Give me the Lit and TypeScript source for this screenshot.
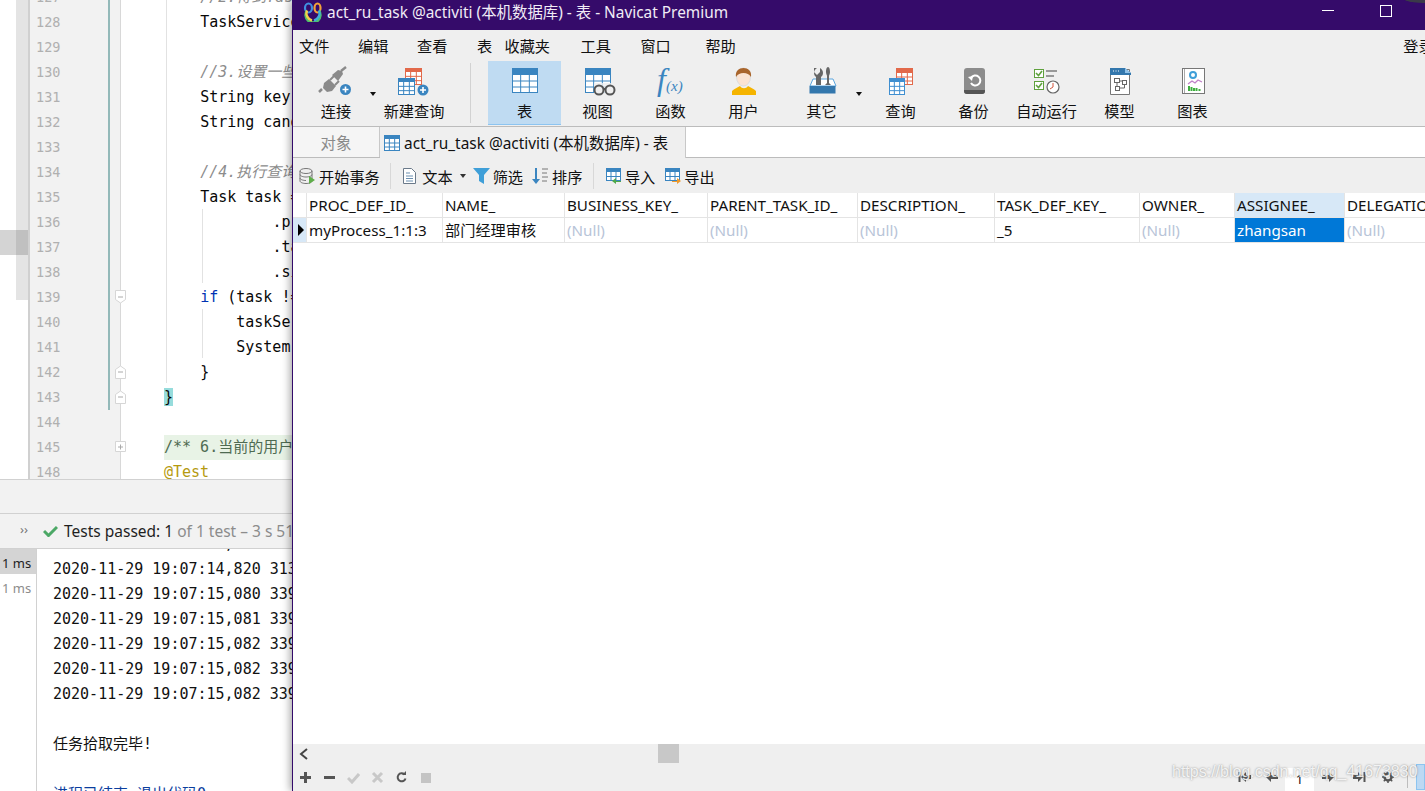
import { LitElement, css, html, svg, unsafeCSS } from 'lit'
import { customElement } from 'lit/decorators.js'

const MONO = unsafeCSS('"DejaVu Sans Mono", "Noto Sans CJK SC", monospace')

// draws the little table glyph used all over the navicat toolbar
const tableGlyph = (x: number, y: number, w: number, h: number, color: string, cols = 3, rows = 3, head = 5) => {
  const lines = []
  for (let i = 1; i < cols; i++) {
    const lx = x + (w * i) / cols
    lines.push(svg`<line x1=${lx} y1=${y} x2=${lx} y2=${y + h} stroke=${color} stroke-width="1"/>`)
  }
  for (let i = 1; i < rows; i++) {
    const ly = y + head + ((h - head) * i) / rows
    lines.push(svg`<line x1=${x} y1=${ly} x2=${x + w} y2=${ly} stroke=${color} stroke-width="1"/>`)
  }
  return svg`
    <rect x=${x + 0.5} y=${y + 0.5} width=${w - 1} height=${h - 1} fill="#fff" stroke=${color}/>
    ${lines}
    <path d="M${x} ${y + 2}a2 2 0 0 1 2-2h${w - 4}a2 2 0 0 1 2 2v${head - 2}h-${w}z" fill=${color}/>`
}

const plusBadge = (cx: number, cy: number, r = 5.5) => svg`
  <circle cx=${cx} cy=${cy} r=${r} fill="#3a85c0"/>
  <path d="M${cx - 3} ${cy}h6M${cx} ${cy - 3}v6" stroke="#fff" stroke-width="1.6"/>`

const big = (body: unknown) => html`<svg class="big" width="40" height="32" viewBox="0 0 40 32">${body}</svg>`
const small = (body: unknown) => html`<svg class="small" width="17" height="18" viewBox="0 0 17 18">${body}</svg>`

const icons: Record<string, unknown> = {
  connect: big(svg`
    <path d="M16 9l6-5 4 1 1 3-5 7z" fill="#8a8a8a"/>
    <path d="M25 5l5-4" stroke="#8a8a8a" stroke-width="2.500"/>
    <path d="M8 17l5-4 7 7-4 5-5 1-4-4z" fill="#8a8a8a"/>
    <path d="M14 14l4-4M19 19l4-4" stroke="#8a8a8a" stroke-width="2"/>
    <path d="M6 23l-3 3" stroke="#8a8a8a" stroke-width="2.500"/>
    ${plusBadge(29.5, 23.5)}`),
  newQuery: big(svg`
    ${tableGlyph(11, 2, 17, 17, '#e2694a', 3, 3, 4)}
    ${tableGlyph(4, 12, 17, 17, '#3a85c0', 3, 3, 4)}
    ${plusBadge(29, 24)}`),
  table: big(tableGlyph(7, 2, 26, 25, '#3a85c0', 3, 3, 7)),
  view: big(svg`
    ${tableGlyph(7, 2, 26, 25, '#3a85c0', 3, 3, 7)}
    <rect x="16" y="17" width="22" height="12" fill="#efefef" opacity=".8"/>
    <circle cx="21" cy="24" r="4.500" fill="#efefef" stroke="#555" stroke-width="2"/>
    <circle cx="32" cy="24" r="4.500" fill="#efefef" stroke="#555" stroke-width="2"/>
    <path d="M25 23h3" stroke="#555" stroke-width="2"/>`),
  func: big(svg`
    <text x="6" y="24" class="fx-f">f</text>
    <text x="15" y="25" class="fx-x">(x)</text>`),
  user: big(svg`
    <path d="M8 29v-4c2-2 6-4 8-5 2 3 6 3 8 0 2 1 6 3 8 5v4z" fill="#f5b400"/>
    <ellipse cx="19.500" cy="11" rx="7" ry="9" fill="#fbe3d2" stroke="#ddd"/>
    <path d="M12 11c-1-6 3-9 7.500-9s8.500 3 7.500 9c-2-3-4-4-7.500-4s-5.500 1-7.500 4z" fill="#a9652c"/>`),
  other: big(svg`
    <path d="M8 20L11 13H31L34 20Z" fill="#fff" stroke="#5aa5de"/>
    <rect x="7.500" y="20" width="26" height="7.500" fill="#3377ad"/>
    <path d="M12 2v4l3 3 3-3V2c2 1 3 3 3 5s-1 3-2 4v8h-5v-8c-1-1-2-2-2-4s1-4 3-5z" fill="#666"/>
    <path d="M26 1c1.500 0 2 3 2 5s-1 3-1 4v7l2 2h-6l2-2v-7c0-1-1-2-1-4s.5-5 2-5z" fill="#666"/>`),
  query: big(svg`
    ${tableGlyph(15, 2, 17, 17, '#e2694a', 3, 3, 5)}
    ${tableGlyph(8, 12, 16, 17, '#3f8fd0', 3, 3, 4)}`),
  backup: big(svg`
    <rect x="10" y="2" width="21" height="26" rx="3" fill="#8c8c8c"/>
    <path d="M10 24h21v1a3 3 0 0 1-3 3H13a3 3 0 0 1-3-3z" fill="#555"/>
    <path d="M17 12a5 5 0 1 1 0 5" fill="none" stroke="#fff" stroke-width="2"/>
    <path d="M14 11l5-1-1 5z" fill="#fff"/>`),
  auto: big(svg`
    <rect x="7.500" y="3.500" width="9" height="8" fill="#fff" stroke="#5fa13d"/>
    <rect x="7.500" y="15.500" width="9" height="8" fill="#fff" stroke="#5fa13d"/>
    <path d="M9 7l2.500 2.500L15 5M9 19l2.500 2.500L15 17" fill="none" stroke="#5fa13d" stroke-width="1.600"/>
    <path d="M19 5h11M19 10h8" stroke="#999" stroke-width="2"/>
    <circle cx="26" cy="21" r="6" fill="#fff" stroke="#666" stroke-width="1.200"/>
    <path d="M26 17v4l-3 2" fill="none" stroke="#d3573f" stroke-width="1"/>`),
  model: big(svg`
    <path d="M10.500 3.500h19v25h-19z" fill="#fff" stroke="#777"/>
    <path d="M10 2h15l6 5v2H10z" fill="#3377ad"/>
    <path d="M25 2l6 5h-6z" fill="#8fc1e8"/>
    <path d="M13 5h1M15.500 5h1M18 5h1" stroke="#fff"/>
    <rect x="14.500" y="12.500" width="5" height="4" fill="#fff" stroke="#666"/>
    <rect x="22.500" y="14.500" width="4" height="4" fill="#fff" stroke="#666"/>
    <rect x="15.500" y="20.500" width="4" height="4" fill="#fff" stroke="#666"/>
    <path d="M17 16.500v4M19.500 15h3M19.500 22h5v-3.500" fill="none" stroke="#666"/>`),
  chart: big(svg`
    <rect x="9.500" y="2.500" width="22" height="25" fill="#fff" stroke="#777"/>
    <path d="M11.500 3v24" stroke="#aaa"/>
    <circle cx="20" cy="9" r="3" fill="#fff" stroke="#3f9fd8" stroke-width="2"/>
    <path d="M15 18l4-3 3 2 3-3 4 2" fill="none" stroke="#c080c8" stroke-width="1.300"/>
    <path d="M16 25v-5M18.500 25v-4M21 25v-3M23.500 25v-3M26.500 25v-2" stroke="#3fae3f" stroke-width="2"/>`),
  begin: small(svg`
    <ellipse cx="7" cy="4" rx="6" ry="2.500" fill="#eee" stroke="#777"/>
    <path d="M1 4v10c0 1.500 3 2.500 6 2.500s6-1 6-2.500V4M1 7.500c0 1.500 3 2.500 6 2.500s6-1 6-2.500M1 11c0 1.500 3 2.500 6 2.500" fill="none" stroke="#777"/>
    <path d="M10 9l6 4-6 4z" fill="#5fae4a"/>`),
  text: small(svg`
    <path d="M1.500 1.500h8l4 4v11h-12z" fill="#fff" stroke="#6b7a8a"/>
    <path d="M4 6h4M4 9h7M4 11.500h7M4 14h7" stroke="#6b8fb0"/>`),
  filter: small(svg`<path d="M0 1h17l-6 7v9l-5-3V8z" fill="#3f9fd8"/>`),
  sort: small(svg`
    <path d="M4 1v13" stroke="#3a85c0" stroke-width="2"/>
    <path d="M0 12h8l-4 5z" fill="#3a85c0"/>
    <path d="M10 2h6M10 6h5M10 10h6M10 14h5" stroke="#777"/>`),
  importData: small(svg`
    ${tableGlyph(1, 1, 15, 13, '#3a85c0', 3, 2, 4)}
    <path d="M16 16h-5v-3l-4 3 4 3v-2h5z" fill="#4fa94a" transform="translate(0 -2)"/>`),
  exportData: small(svg`
    ${tableGlyph(1, 1, 15, 13, '#3a85c0', 3, 2, 4)}
    <path d="M8 14h5v-3l4 3-4 3v-2H8z" fill="#ef9a2d"/>`),
}

const tool = (icon: string, label: string, cls = '') => html`
  <div class="tool ${cls}">${icons[icon]}<span>${label}</span></div>`

const arrow = html`<span class="drop"></span>`

const MENU: [string, number][] = [
  ['文件', 6], ['编辑', 28.6], ['查看', 28.6], ['表', 29.6], ['收藏夹', 12.4],
  ['工具', 30.4], ['窗口', 29.6], ['帮助', 34.6], ['登录', 667.6],
]

const COLUMNS = ['PROC_DEF_ID_', 'NAME_', 'BUSINESS_KEY_', 'PARENT_TASK_ID_', 'DESCRIPTION_', 'TASK_DEF_KEY_', 'OWNER_', 'ASSIGNEE_', 'DELEGATION_']
const ROW = ['myProcess_1:1:3', '部门经理审核', null, null, null, '_5', null, 'zhangsan', null]

const LINE_NUMBERS = [127, 128, 129, 130, 131, 132, 133, 134, 135, 136, 137, 138, 139, 140, 141, 142, 143, 144, 145, 148]
const FOLDS: Record<number, string> = { 139: 'open', 142: 'close', 143: 'close', 145: 'plus' }

const CODE = [
  [8, 'comment', '//2.得到Task'],
  [8, '', 'TaskService'],
  [0, '', ''],
  [8, 'comment', '//3.设置一些'],
  [8, '', 'String key'],
  [8, '', 'String cand'],
  [0, '', ''],
  [8, 'comment', '//4.执行查询'],
  [8, '', 'Task task ='],
  [16, '', '.pr'],
  [16, '', '.ta'],
  [16, '', '.si'],
  [8, 'if', 'if (task !='],
  [12, '', 'taskSer'],
  [12, '', 'System'],
  [8, '', '}'],
  [4, 'match', '}'],
  [0, '', ''],
  [4, 'doc', '/** 6.当前的用户'],
  [4, 'anno', '@Test'],
] as [number, string, string][]

// x, top, height of the indent guides
const GUIDES = [[166, 0, 383], [202, 209, 74], [202, 309, 49]]

const LOG = [
  '2020-11-29 19:07:14,800 313',
  '2020-11-29 19:07:14,820 313',
  '2020-11-29 19:07:15,080 339',
  '2020-11-29 19:07:15,081 339',
  '2020-11-29 19:07:15,082 339',
  '2020-11-29 19:07:15,082 339',
  '2020-11-29 19:07:15,082 339',
]

@customElement('app-root')
export class AppRoot extends LitElement {
  static styles = css`
    :host {
      display: block;
      position: relative;
      width: 1425px;
      height: 791px;
      overflow: hidden;
      background: #fff;
      font-family: "Noto Sans", "Noto Sans CJK SC", sans-serif;
    }

    /* ide behind the navicat window */
    .ide {
      display: flex;
      flex-direction: column;
      width: 293px;
      height: 791px;
      overflow: hidden;
    }
    .editor {
      display: flex;
      height: 479px;
      flex: none;
      overflow: hidden;
      position: relative;
    }
    .stripe {
      width: 16px;
      flex: none;
    }
    .scroll-track {
      width: 12px;
      height: 300px;
      flex: none;
      background: #e4e4e4;
    }
    .scroll-mark {
      position: absolute;
      left: 0;
      top: 230px;
      width: 16px;
      height: 25px;
      background: #d4d4d4;
      box-shadow: 12px 0 0 #c0c0c0;
    }
    .gutter {
      width: 90px;
      flex: none;
      margin-top: -15px;
      height: 500px;
      background: #f2f2f2;
      border-left: 2px solid #d0d0d0;
      border-right: 1px solid #d8d8d8;
    }
    .num {
      height: 25px;
      padding-left: 6px;
      font: 13.5px/25px ${MONO};
      color: #b0b0b0;
      position: relative;
    }
    .num.changed::after {
      content: "";
      position: absolute;
      left: 78px;
      top: 0;
      width: 2px;
      height: 25px;
      background: #93b9b9;
    }
    .fold {
      position: absolute;
      left: 85px;
      top: 5px;
    }
    .code {
      flex: 1;
      margin-top: -15px;
      min-width: 0;
      position: relative;
    }
    .line {
      height: 25px;
      font: 15px/25px ${MONO};
      color: #080808;
      white-space: pre;
      padding-left: 43px;
    }
    .comment { color: #8c8c8c; font-style: italic; }
    .kw { color: #0033b3; }
    .match { background: #96dcdc; }
    .doc-row {
      background: #e8f3e6;
      margin-left: 43px;
      padding-left: 0;
    }
    .doc { color: #4f6b52; }
    .anno { color: #b59a10; }
    .guide {
      position: absolute;
      width: 1px;
      background: #e2e2e2;
    }

    .gap {
      height: 33px;
      flex: none;
      background: #f2f2f2;
      border-top: 1px solid #d1d1d1;
      border-bottom: 1px solid #d1d1d1;
    }
    .tests {
      height: 34px;
      flex: none;
      display: flex;
      align-items: center;
      background: #f2f2f2;
      border-bottom: 1px solid #d1d1d1;
      padding-left: 20px;
      font-size: 15.5px;
      white-space: nowrap;
      color: #1f1f1f;
    }
    .chevrons {
      width: 23px;
      flex: none;
      color: #777;
      font-size: 13px;
      margin-top: -4px;
    }
    .tests svg {
      flex: none;
      margin-right: 6px;
    }
    .tests i {
      font-style: normal;
      color: #8c8c8c;
    }
    .bottom {
      flex: 1;
      display: flex;
      min-height: 0;
      overflow: hidden;
    }
    .times {
      width: 36px;
      flex: none;
      border-right: 1px solid #d1d1d1;
      font-size: 13px;
    }
    .times div {
      height: 25px;
      line-height: 28px;
      padding-left: 2px;
      color: #8c8c8c;
    }
    .times div.on {
      background: #d4d4d4;
      color: #1f1f1f;
    }
    .console {
      flex: 1;
      margin-top: -17px;
      padding-left: 16px;
      font: 15px/25px ${MONO};
      white-space: pre;
      color: #111;
    }
    .console .exit {
      color: #0b3e9e;
    }

    /* navicat window */
    .window {
      position: absolute;
      left: 292px;
      top: 0;
      width: 1133px;
      height: 791px;
      display: flex;
      flex-direction: column;
      border-left: 1px solid #340b6b;
      box-sizing: border-box;
      background: #fff;
      box-shadow: -2px 0 8px rgba(0, 0, 0, 0.35);
      overflow: hidden;
    }
    .title {
      height: 30px;
      flex: none;
      box-sizing: border-box;
      padding: 0 0 7px 10px;
      display: flex;
      align-items: center;
      background: #350b6a;
      color: #f1ecf6;
      font-size: 15.4px;
      white-space: nowrap;
      position: relative;
    }
    .title svg {
      flex: none;
      margin-right: 4px;
    }
    .win-min {
      position: absolute;
      left: 1029px;
      top: 10px;
      width: 12px;
      height: 1px;
      background: #fff;
    }
    .win-max {
      position: absolute;
      left: 1087px;
      top: 5px;
      width: 10px;
      height: 10px;
      border: 1px solid #fff;
    }
    .corner {
      position: absolute;
      left: 1105px;
      top: -16px;
      width: 50px;
      height: 19px;
      border-radius: 50%;
      background: #3a3a48;
    }
    .menu {
      height: 31px;
      flex: none;
      box-sizing: border-box;
      padding-bottom: 2px;
      display: flex;
      align-items: center;
      background: #efefef;
      font-size: 15.2px;
      color: #111;
      white-space: nowrap;
    }
    .toolbar {
      height: 66px;
      flex: none;
      display: flex;
      box-sizing: border-box;
      padding-left: 7px;
      background: #efefef;
      border-bottom: 1px solid #bcbcbc;
    }
    .tool {
      width: 73px;
      height: 64px;
      flex: none;
      display: flex;
      flex-direction: column;
      align-items: center;
      font-size: 15.2px;
      color: #111;
      white-space: nowrap;
      box-sizing: border-box;
      padding-top: 5px;
    }
    .tool span {
      margin-top: 3px;
      line-height: 21px;
    }
    .tool.first { width: 72px; }
    .tool.active {
      background: #bfdbf2;
      border-bottom: 1px solid #8cc4f0;
    }
    .tool.pushed { margin-left: 5px; }
    .drop {
      width: 6px;
      flex: none;
      position: relative;
    }
    .drop::after {
      content: "";
      position: absolute;
      left: -2px;
      top: 31px;
      border: 3px solid transparent;
      border-top: 4px solid #111;
      border-bottom: none;
    }
    .sep {
      width: 1px;
      flex: none;
      margin: 2px 17px 3px 20px;
      background: #d2d2d2;
    }
    .fx-f {
      font: italic 32px "Liberation Serif", serif;
      fill: #3a85c0;
    }
    .fx-x {
      font: italic 15px "Liberation Serif", serif;
      fill: #3a85c0;
    }
    .tabs {
      height: 31px;
      flex: none;
      display: flex;
      box-sizing: border-box;
      background: #fff;
      border-bottom: 1px solid #bcbcbc;
      font-size: 15.4px;
      white-space: nowrap;
    }
    .tab-objects {
      width: 87px;
      display: flex;
      align-items: center;
      justify-content: center;
      background: #f5f5f5;
      color: #8a8a8a;
      border-right: 1px solid #c8c8c8;
      box-sizing: border-box;
    }
    .tab-current {
      width: 306px;
      height: 31px;
      display: flex;
      align-items: center;
      gap: 4px;
      padding-left: 4px;
      box-sizing: border-box;
      background: #efefef;
      border-right: 1px solid #c8c8c8;
      color: #111;
    }
    .tab-current svg {
      flex: none;
    }
    .subbar {
      height: 35px;
      flex: none;
      box-sizing: border-box;
      padding: 1px 0 0 6px;
      display: flex;
      align-items: center;
      background: #efefef;
      font-size: 15.2px;
      color: #111;
      white-space: nowrap;
    }
    .sub {
      display: flex;
      align-items: center;
      gap: 3px;
    }
    .sub svg {
      flex: none;
    }
    .sub.next { margin-left: 9px; }
    .subsep {
      width: 1px;
      height: 26px;
      margin: 0 11px 0 10.5px;
      background: #d8d8d8;
    }
    .subdrop {
      margin: 0 7px;
      border: 3px solid transparent;
      border-top: 4px solid #333;
      border-bottom: none;
    }
    .grid {
      flex: 1;
      min-height: 0;
      display: grid;
      grid-template-columns: 14px 136px 122px 143px 150px 137px 145px 95px 110px 110px;
      grid-auto-rows: 25px;
      align-content: start;
      font-size: 15.2px;
      overflow: hidden;
      background: #fff;
    }
    .cell {
      box-sizing: border-box;
      line-height: 24px;
      padding-left: 2px;
      border-right: 1px solid #e4e4e4;
      border-bottom: 1px solid #e4e4e4;
      white-space: nowrap;
      overflow: hidden;
      color: #111;
    }
    .cell.null { color: #b8c4d8; }
    .cell.hl { background: #d7e8f7; }
    .cell.sel {
      background: #0078d7;
      color: #fff;
    }
    .indicator {
      background: #d7e8f7;
      display: flex;
      align-items: center;
      padding-left: 5px;
    }
    .indicator::before {
      content: "";
      border: 6px solid transparent;
      border-left: 6px solid #000;
      border-right: none;
    }
    .hscroll {
      height: 19px;
      flex: none;
      display: flex;
      align-items: center;
      background: #efefef;
      padding-left: 6px;
    }
    .thumb {
      width: 21px;
      height: 19px;
      margin-left: 349px;
      background: #c8c8c8;
    }
    .statusbar {
      height: 28px;
      flex: none;
      display: flex;
      align-items: center;
      padding-left: 6px;
      background: #efefef;
    }
    .statusbar svg {
      flex: none;
    }
    .left-tools {
      display: flex;
      gap: 11px;
    }
    .pager {
      margin-left: auto;
      display: flex;
      align-items: center;
      gap: 15px;
      height: 100%;
    }
    .page {
      width: 29px;
      height: 23px;
      align-self: flex-end;
      background: #fff;
      font-size: 13px;
      text-align: center;
      line-height: 23px;
      color: #111;
      margin: 0 -7px 0 -8px;
    }
    .to-last { margin-left: 4px; }
    .gear { margin-left: 1px; }
    .pipe {
      width: 1px;
      height: 22px;
      background: #bdbdbd;
      margin-left: -2px;
    }
    .blue-box {
      width: 9px;
      height: 26px;
      background: #bcd9f3;
      border: 1px solid #8cc4f0;
      box-sizing: border-box;
      margin-left: -7px;
    }
    .watermark {
      position: absolute;
      left: 879px;
      top: 762px;
      font: 16px/20px "Liberation Sans", sans-serif;
      color: rgba(255, 255, 255, 0.85);
      text-shadow: 0 0 2px rgba(90, 90, 90, 0.7);
      white-space: nowrap;
      pointer-events: none;
    }
  `

  private foldIcon(kind: string) {
    const shape = kind === 'open'
      ? 'M.5.5h10v9l-5 3.500-5-3.500z'
      : kind === 'close'
        ? 'M.5 13.500h10v-9l-5-3.500-5 3.500z'
        : 'M.5 1.500h10v10h-10z'
    return html`<svg class="fold" width="11" height="14" viewBox="0 0 11 14">
      <path d=${shape} fill="#fff" stroke="#d6d6d6"/>
      <path d="M3 7h5" stroke="#aaa"/>
      ${kind === 'plus' ? svg`<path d="M5.500 4.500v5" stroke="#aaa"/>` : ''}
    </svg>`
  }

  private renderIde() {
    return html`
      <div class="ide">
        <div class="editor">
          <div class="stripe"></div>
          <div class="scroll-track"></div>
          <div class="scroll-mark"></div>
          <div class="gutter">
            ${LINE_NUMBERS.map(n => html`
              <div class="num ${n <= 143 ? 'changed' : ''}">${n}${FOLDS[n] ? this.foldIcon(FOLDS[n]) : ''}</div>`)}
          </div>
          <div class="code">
            ${GUIDES.map(([x, top, h]) => html`<div class="guide" style="left:${x - 121}px;top:${top + 15}px;height:${h}px"></div>`)}
            ${CODE.map(([indent, kind, text]) => this.renderLine(indent, kind, text))}
          </div>
        </div>
        <div class="gap"></div>
        <div class="tests">
          <span class="chevrons">››</span>
          <svg width="15" height="12" viewBox="0 0 15 12"><path d="M1 6l4.500 4.500L14 2" fill="none" stroke="#4ca866" stroke-width="3"/></svg>
          <span>Tests passed: 1 <i>of 1 test – 3 s 519 ms</i></span>
        </div>
        <div class="bottom">
          <div class="times">
            <div class="on">1 ms</div>
            <div>1 ms</div>
          </div>
          <div class="console">${LOG.map(l => html`<div>${l}</div>`)}<div>&nbsp;</div><div>任务拾取完毕!</div><div>&nbsp;</div><div class="exit">进程已结束,退出代码0</div></div>
        </div>
      </div>`
  }

  private renderLine(indent: number, kind: string, text: string) {
    const pad = ' '.repeat(indent - 4 > 0 ? indent - 4 : 0)
    if (kind === 'if') {
      return html`<div class="line">${pad}<span class="kw">if</span>${text.slice(2)}</div>`
    }
    if (kind === 'doc') return html`<div class="line doc-row">${pad}<span class="doc">${text}</span></div>`
    return html`<div class="line">${pad}<span class=${kind}>${text}</span></div>`
  }

  private renderWindow() {
    return html`
      <div class="window">
        <div class="title">
          <svg width="20" height="20" viewBox="0 0 20 20" fill="none">
            <ellipse cx="5.500" cy="6" rx="3.500" ry="4.500" stroke="#3f8fe0" stroke-width="2.200"/>
            <ellipse cx="14.500" cy="6" rx="3" ry="4.500" stroke="#f2a23a" stroke-width="2.200"/>
            <path d="M4 8.500a7.500 7.500 0 1 0 12 0" stroke="#4fc06c" stroke-width="2.400"/>
            <path d="M4 8.500a7.500 7.500 0 0 0 5 10" stroke="#f2d04a" stroke-width="2.400"/>
            <path d="M11 18.500a7.500 7.500 0 0 0 5-10" stroke="#3fb0d8" stroke-width="2.400"/>
          </svg>
          <span>act_ru_task @activiti (本机数据库) - 表 - Navicat Premium</span>
          <div class="win-min"></div>
          <div class="win-max"></div>
          <div class="corner"></div>
        </div>
        <div class="menu">
          ${MENU.map(([label, gap]) => html`<span style="margin-left:${gap}px">${label}</span>`)}
        </div>
        <div class="toolbar">
          ${tool('connect', '连接', 'first')}
          ${arrow}
          ${tool('newQuery', '新建查询', 'first')}
          <div class="sep"></div>
          ${tool('table', '表', 'active')}
          ${tool('view', '视图')}
          ${tool('func', '函数')}
          ${tool('user', '用户')}
          ${tool('other', '其它', 'pushed')}
          ${arrow}
          ${tool('query', '查询')}
          ${tool('backup', '备份')}
          ${tool('auto', '自动运行')}
          ${tool('model', '模型')}
          ${tool('chart', '图表')}
        </div>
        <div class="tabs">
          <div class="tab-objects">对象</div>
          <div class="tab-current">
            <svg width="16" height="16" viewBox="0 0 16 16">${tableGlyph(0, 0, 16, 16, '#3a85c0', 3, 3, 4)}</svg>
            <span>act_ru_task @activiti (本机数据库) - 表</span>
          </div>
        </div>
        <div class="subbar">
          <div class="sub">${icons.begin}<span>开始事务</span></div>
          <div class="subsep"></div>
          <div class="sub">${icons.text}<span>文本</span></div>
          <div class="subdrop"></div>
          <div class="sub">${icons.filter}<span>筛选</span></div>
          <div class="sub next">${icons.sort}<span>排序</span></div>
          <div class="subsep"></div>
          <div class="sub">${icons.importData}<span>导入</span></div>
          <div class="sub next">${icons.exportData}<span>导出</span></div>
        </div>
        <div class="grid">
          <div class="cell"></div>
          ${COLUMNS.map((c, i) => html`<div class="cell ${i === 7 ? 'hl' : ''}">${c}</div>`)}
          <div class="cell indicator"></div>
          ${ROW.map((v, i) => html`<div class="cell ${v === null ? 'null' : ''} ${i === 7 ? 'sel' : ''}">${v ?? '(Null)'}</div>`)}
        </div>
        <div class="hscroll">
          <svg width="10" height="12" viewBox="0 0 10 12"><path d="M8 1L2 6l6 5" fill="none" stroke="#444" stroke-width="2"/></svg>
          <div class="thumb"></div>
        </div>
        <div class="statusbar">
          <div class="left-tools">
            <svg width="13" height="13" viewBox="0 0 13 13"><path d="M6.500 1v11M1 6.500h11" stroke="#555" stroke-width="3"/></svg>
            <svg width="13" height="13" viewBox="0 0 13 13"><path d="M1 6.500h11" stroke="#555" stroke-width="3"/></svg>
            <svg width="13" height="13" viewBox="0 0 13 13"><path d="M1 7l4 4 7-8" fill="none" stroke="#c8c8c8" stroke-width="3"/></svg>
            <svg width="13" height="13" viewBox="0 0 13 13"><path d="M2 2l9 9M11 2l-9 9" stroke="#c8c8c8" stroke-width="3"/></svg>
            <svg width="13" height="13" viewBox="0 0 13 13"><path d="M10.500 7.500a4 4 0 1 1-1-4" fill="none" stroke="#555" stroke-width="2"/><path d="M7 4h4V0z" fill="#555"/></svg>
            <svg width="13" height="13" viewBox="0 0 13 13"><rect x="2" y="2" width="10" height="10" fill="#c4c4c4"/></svg>
          </div>
          <div class="pager">
            <svg width="13" height="12" viewBox="0 0 13 12"><path d="M1.500 1v10" stroke="#555" stroke-width="2"/><path d="M3 6l5-5v3h5v4H8v3z" fill="#555"/></svg>
            <svg width="12" height="12" viewBox="0 0 12 12"><path d="M0 6l5-5v3h7v4H5v3z" fill="#555"/></svg>
            <div class="page">1</div>
            <svg width="12" height="12" viewBox="0 0 12 12"><path d="M12 6L7 1v3H0v4h7v3z" fill="#555"/></svg>
            <svg class="to-last" width="13" height="12" viewBox="0 0 13 12"><path d="M11.500 1v10" stroke="#555" stroke-width="2"/><path d="M10 6L5 1v3H0v4h5v3z" fill="#555"/></svg>
            <svg class="gear" width="12" height="12" viewBox="0 0 12 12"><circle cx="6" cy="6" r="3.500" fill="none" stroke="#555" stroke-width="2.500"/><path d="M6 0v2M6 10v2M0 6h2M10 6h2M1.800 1.800l1.400 1.400M8.800 8.800l1.400 1.400M1.800 10.200l1.400-1.400M8.800 3.200l1.400-1.400" stroke="#555" stroke-width="1.500"/></svg>
            <div class="pipe"></div>
            <div class="blue-box"></div>
          </div>
        </div>
        <div class="watermark">https://blog.csdn.net/qq_41673830</div>
      </div>`
  }

  render() {
    return html`${this.renderIde()}${this.renderWindow()}`
  }
}
